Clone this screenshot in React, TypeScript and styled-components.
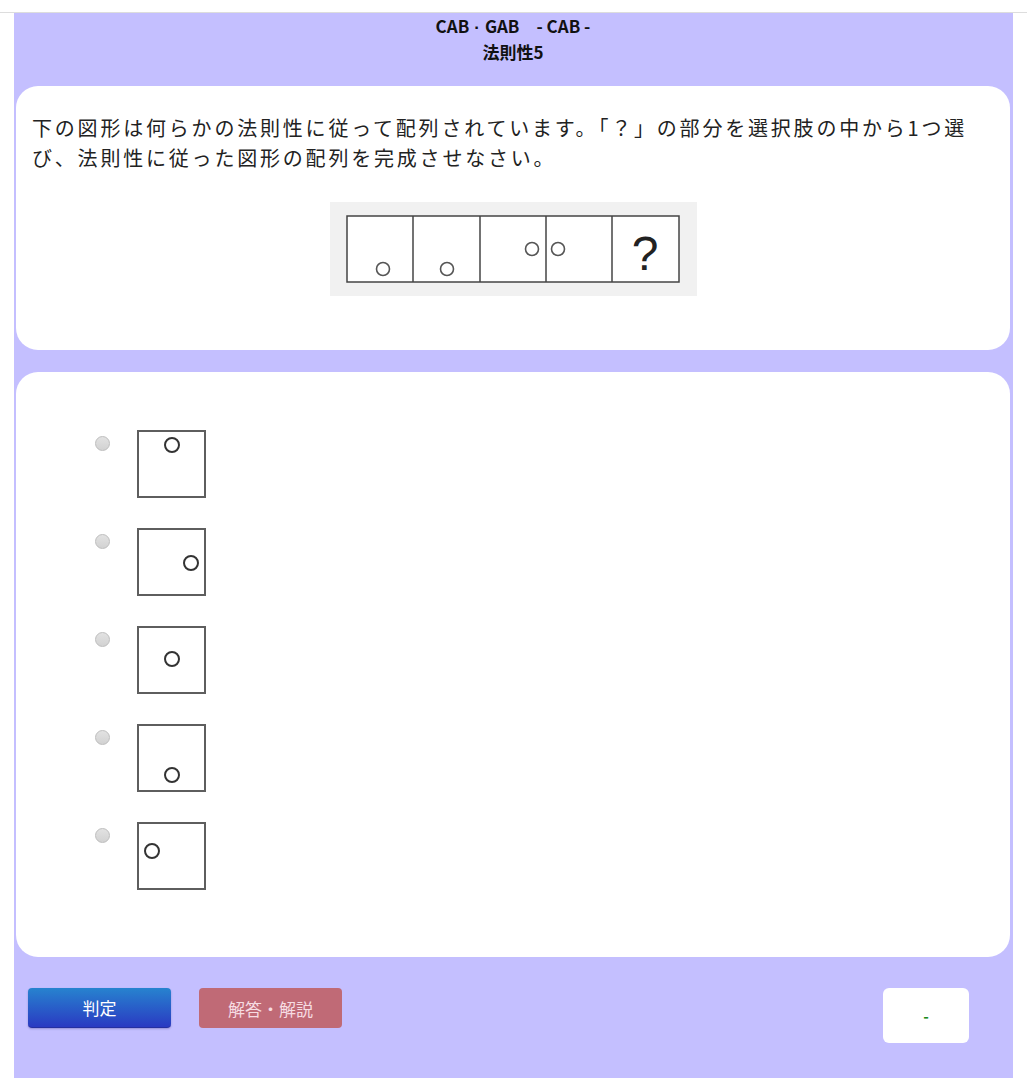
import React from "react";
import styled, { createGlobalStyle } from "styled-components";

const GlobalStyle = createGlobalStyle`
  body {
    margin: 0;
    background: #fff;
    font-family: "Noto Sans CJK JP", "Noto Sans", sans-serif;
    color: #333;
  }
`;

type Dot = { cx: number; cy: number };

const options: Dot[] = [
  { cx: 34, cy: 14 },
  { cx: 53, cy: 34 },
  { cx: 34, cy: 32 },
  { cx: 34, cy: 50 },
  { cx: 14, cy: 28 },
];

const App = () => {
  return (
    <>
      <GlobalStyle />
      <TopBar />
      <Panel>
        <Header>
          <HeaderLine>
            CAB<Dot>·</Dot>GAB　- CAB -
          </HeaderLine>
          <HeaderLine>法則性5</HeaderLine>
        </Header>
        <Card>
          <Question>
            下の図形は何らかの法則性に従って配列されています。「？」の部分を選択肢の中から1つ選び、法則性に従った図形の配列を完成させなさい。
          </Question>
          <FigureBox>
            <svg width="367" height="94" viewBox="0 0 367 94">
              <rect x="17" y="14" width="332" height="66" fill="#fff" stroke="#444" strokeWidth="1.5" />
              {[83, 150, 216, 282].map((x) => (
                <line key={x} x1={x} y1="14" x2={x} y2="80" stroke="#444" strokeWidth="1.5" />
              ))}
              <circle cx="53" cy="67" r="6.5" fill="none" stroke="#555" strokeWidth="1.6" />
              <circle cx="117" cy="67" r="6.5" fill="none" stroke="#555" strokeWidth="1.6" />
              <circle cx="202" cy="47" r="6.5" fill="none" stroke="#555" strokeWidth="1.6" />
              <circle cx="228" cy="47" r="6.5" fill="none" stroke="#555" strokeWidth="1.6" />
              <text
                x="315"
                y="68"
                textAnchor="middle"
                fontSize="48"
                fontFamily="Liberation Sans, sans-serif"
                fill="#222"
              >
                ?
              </text>
            </svg>
          </FigureBox>
        </Card>
        <ChoiceCard>
          {options.map((o, i) => (
            <Choice key={i}>
              <Radio />
              <svg width="69" height="68" viewBox="0 0 69 68">
                <rect x="1" y="1" width="67" height="66" fill="#fff" stroke="#5e5e5e" strokeWidth="2" />
                <circle cx={o.cx + 1} cy={o.cy + 1} r="7" fill="none" stroke="#333" strokeWidth="2" />
              </svg>
            </Choice>
          ))}
        </ChoiceCard>
        <Footer>
          <JudgeButton>判定</JudgeButton>
          <AnswerButton>解答・解説</AnswerButton>
          <Spacer />
          <ResultBox>-</ResultBox>
        </Footer>
      </Panel>
    </>
  );
};

export default App;

const TopBar = styled.div`
  height: 12px;
  border-bottom: 1px solid #ddd;
`;

const Panel = styled.div`
  margin-left: 14px;
  width: 999px;
  box-sizing: border-box;
  padding: 0 3px 0 2px;
  background: #c4bfff;
  height: 1065px;
`;

const Header = styled.div`
  height: 73px;
  text-align: center;
  font-weight: bold;
  font-size: 17px;
  color: #111;
`;

const HeaderLine = styled.div`
  height: 26px;
  line-height: 26px;
`;

const Dot = styled.span`
  font-family: "Liberation Sans", sans-serif;
  margin: 0 5px;
`;

const Card = styled.div`
  background: #fff;
  border-radius: 22px;
  height: 264px;
  box-sizing: border-box;
  padding: 27px 16px 0 16px;
`;

const Question = styled.p`
  margin: 0;
  max-width: 948px;
  font-size: 20px;
  line-height: 30px;
  letter-spacing: 2.8px;
  color: #222;
`;

const FigureBox = styled.div`
  width: 367px;
  height: 94px;
  margin: 29px auto 0;
  background: #f1f1f1;
  svg {
    display: block;
  }
`;

const ChoiceCard = styled.div`
  background: #fff;
  border-radius: 22px;
  margin-top: 22px;
  height: 585px;
  box-sizing: border-box;
  padding: 58px 0 0 79px;
  display: flex;
  flex-direction: column;
  gap: 30px;
`;

const Choice = styled.div`
  display: flex;
  align-items: flex-start;
  gap: 27px;
  svg {
    display: block;
  }
`;

const Radio = styled.span`
  width: 13px;
  height: 13px;
  margin-top: 6px;
  border-radius: 50%;
  background: linear-gradient(#e2e2e2, #d2d2d2);
  border: 1px solid #bdbdbd;
`;

const Footer = styled.div`
  display: flex;
  align-items: flex-start;
  padding: 31px 41px 0 12px;
`;

const BaseButton = styled.div`
  width: 143px;
  height: 40px;
  border-radius: 4px;
  display: flex;
  align-items: center;
  justify-content: center;
  font-size: 17px;
  box-sizing: border-box;
`;

const JudgeButton = styled(BaseButton)`
  background: linear-gradient(#2783cf, #2a3ac2);
  color: #fff;
  border-bottom: 1px solid #2630a0;
  box-shadow: 0 1px 2px rgba(40, 40, 120, 0.3);
`;

const AnswerButton = styled(BaseButton)`
  margin-left: 28px;
  background: #c06a76;
  color: #f6dce2;
`;

const Spacer = styled.div`
  flex: 1;
`;

const ResultBox = styled.div`
  width: 86px;
  height: 55px;
  background: #fff;
  border-radius: 6px;
  display: flex;
  align-items: center;
  justify-content: center;
  color: #1a8a1a;
  font-size: 15px;
  font-weight: bold;
`;
